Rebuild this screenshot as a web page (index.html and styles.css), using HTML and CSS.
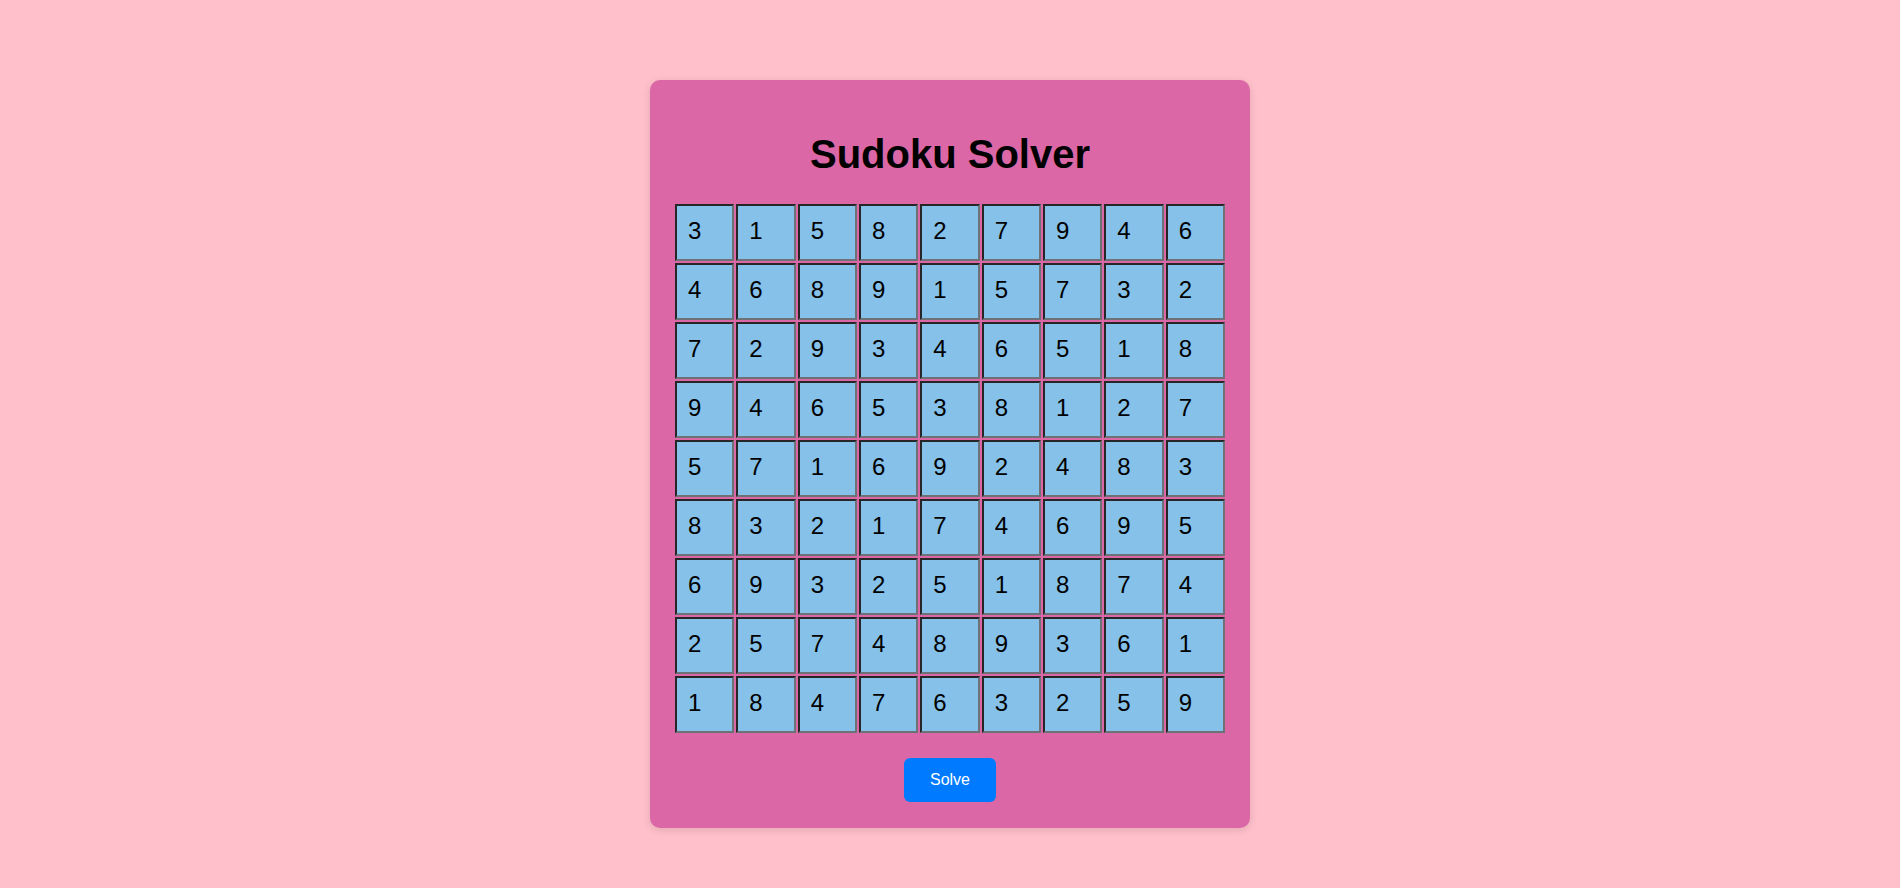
FILE: index.html
```html
<!DOCTYPE html>
<html lang="en">
<head>
<meta charset="utf-8">
<title>Sudoku Solver</title>
<link rel="stylesheet" href="styles.css">
</head>
<body>
<main class="card">
  <h1 class="title">Sudoku Solver</h1>
  <div class="grid">
    <input class="cell" value="3"><input class="cell" value="1"><input class="cell" value="5"><input class="cell" value="8"><input class="cell" value="2"><input class="cell" value="7"><input class="cell" value="9"><input class="cell" value="4"><input class="cell" value="6">
    <input class="cell" value="4"><input class="cell" value="6"><input class="cell" value="8"><input class="cell" value="9"><input class="cell" value="1"><input class="cell" value="5"><input class="cell" value="7"><input class="cell" value="3"><input class="cell" value="2">
    <input class="cell" value="7"><input class="cell" value="2"><input class="cell" value="9"><input class="cell" value="3"><input class="cell" value="4"><input class="cell" value="6"><input class="cell" value="5"><input class="cell" value="1"><input class="cell" value="8">
    <input class="cell" value="9"><input class="cell" value="4"><input class="cell" value="6"><input class="cell" value="5"><input class="cell" value="3"><input class="cell" value="8"><input class="cell" value="1"><input class="cell" value="2"><input class="cell" value="7">
    <input class="cell" value="5"><input class="cell" value="7"><input class="cell" value="1"><input class="cell" value="6"><input class="cell" value="9"><input class="cell" value="2"><input class="cell" value="4"><input class="cell" value="8"><input class="cell" value="3">
    <input class="cell" value="8"><input class="cell" value="3"><input class="cell" value="2"><input class="cell" value="1"><input class="cell" value="7"><input class="cell" value="4"><input class="cell" value="6"><input class="cell" value="9"><input class="cell" value="5">
    <input class="cell" value="6"><input class="cell" value="9"><input class="cell" value="3"><input class="cell" value="2"><input class="cell" value="5"><input class="cell" value="1"><input class="cell" value="8"><input class="cell" value="7"><input class="cell" value="4">
    <input class="cell" value="2"><input class="cell" value="5"><input class="cell" value="7"><input class="cell" value="4"><input class="cell" value="8"><input class="cell" value="9"><input class="cell" value="3"><input class="cell" value="6"><input class="cell" value="1">
    <input class="cell" value="1"><input class="cell" value="8"><input class="cell" value="4"><input class="cell" value="7"><input class="cell" value="6"><input class="cell" value="3"><input class="cell" value="2"><input class="cell" value="5"><input class="cell" value="9">
  </div>
  <div class="actions">
    <button class="solve" type="button">Solve</button>
  </div>
</main>
</body>
</html>
```

FILE: styles.css
```css
html, body {
  margin: 0;
  padding: 0;
}
body {
  background: #ffc0cb;
  font-family: "Liberation Sans", Arial, sans-serif;
  padding-top: 80px;
  min-height: 888px;
  box-sizing: border-box;
}
.card {
  width: 600px;
  box-sizing: border-box;
  margin: 0 auto;
  background: #db67a7;
  border-radius: 10px;
  box-shadow: 0 2px 8px rgba(0, 0, 0, 0.12);
  padding: 52px 25px 26px;
}
.title {
  margin: 0 0 28px;
  text-align: center;
  font-size: 40px;
  font-weight: bold;
  line-height: 44px;
  color: #000;
}
.grid {
  display: grid;
  grid-template-columns: repeat(9, 1fr);
  gap: 2px;
}
.cell {
  display: block;
  width: 100%;
  height: 57px;
  box-sizing: border-box;
  margin: 0;
  padding: 0 10px 4px 11px;
  border-style: solid;
  border-width: 2px;
  border-color: #262626 #6d7276 #6d7276 #262626;
  background: #85c1e9;
  font-family: "Liberation Sans", Arial, sans-serif;
  font-size: 24px;
  color: #000;
  outline: none;
}
.actions {
  display: flex;
  justify-content: center;
  margin-top: 25px;
}
.solve {
  width: 92px;
  height: 44px;
  border: none;
  border-radius: 6px;
  background: #007bff;
  color: #fff;
  font-family: "Liberation Sans", Arial, sans-serif;
  font-size: 16px;
  padding: 0;
}
```
